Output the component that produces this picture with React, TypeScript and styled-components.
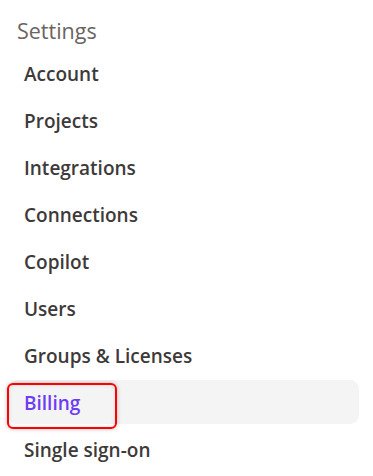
import styled, { createGlobalStyle } from "styled-components";

const GlobalStyle = createGlobalStyle`
  body {
    margin: 0;
    background: #fff;
    font-family: "Open Sans", "Noto Sans", sans-serif;
  }
`;

const items = [
  "Account",
  "Projects",
  "Integrations",
  "Connections",
  "Copilot",
  "Users",
  "Groups & Licenses",
  "Billing",
  "Single sign-on",
];

const App = () => {
  return (
    <>
      <GlobalStyle />
      <Sidebar>
        <Title>Settings</Title>
        <Menu>
          {items.map((label) => (
            <Item key={label} active={label === "Billing"}>
              {label}
              {label === "Billing" && <Highlight />}
            </Item>
          ))}
        </Menu>
      </Sidebar>
    </>
  );
};

export default App;

const Sidebar = styled.nav`
  width: 351px;
  padding: 18px 0 0 8px;
`;

const Title = styled.div`
  padding-left: 9px;
  height: 26px;
  line-height: 26px;
  font-size: 21.5px;
  color: #6b6461;
  margin-bottom: 7px;
`;

const Menu = styled.div`
  display: flex;
  flex-direction: column;
  gap: 3px;
`;

const Item = styled.div<{ active?: boolean }>`
  position: relative;
  display: flex;
  align-items: center;
  box-sizing: border-box;
  height: 44px;
  padding: 2px 0 0 16px;
  border-radius: 9px;
  font-size: 19px;
  font-weight: 600;
  color: ${({ active }) => (active ? "#6d3df5" : "#3d3a39")};
  background: ${({ active }) => (active ? "#f4f4f4" : "transparent")};
`;

const Highlight = styled.span`
  position: absolute;
  left: -1px;
  top: 3px;
  width: 110px;
  height: 46px;
  box-sizing: border-box;
  border: 2px solid #ff0000;
  border-radius: 6px;
  box-shadow: 0 0 4px rgba(0, 0, 0, 0.25), inset 0 0 4px rgba(0, 0, 0, 0.12);
`;
